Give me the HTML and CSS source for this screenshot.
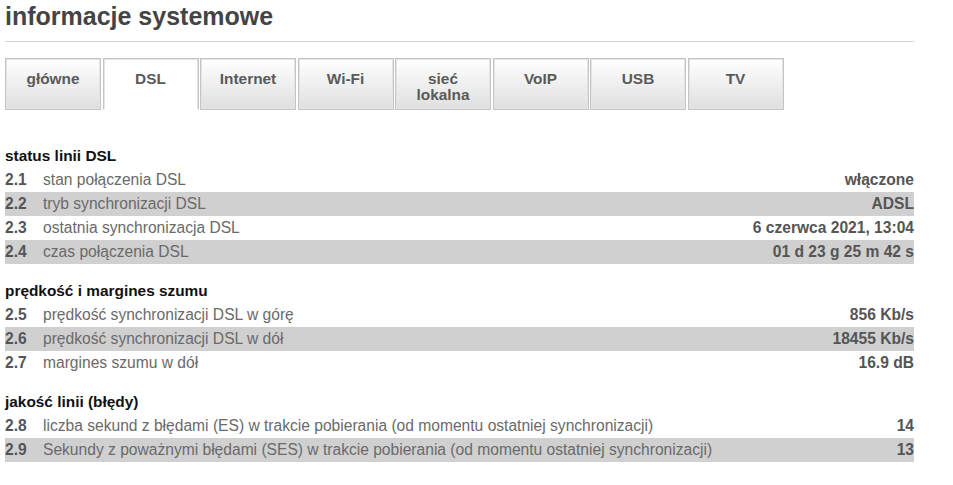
FILE: index.html
```html
<!DOCTYPE html>
<html lang="pl">
<head>
<meta charset="utf-8">
<title>informacje systemowe</title>
<link rel="stylesheet" href="styles.css">
</head>
<body>
<div class="page">
  <h1 class="title">informacje systemowe</h1>
  <div class="rule"></div>
  <nav class="tabs">
    <div class="tab">główne</div>
    <div class="tab active">DSL</div>
    <div class="tab">Internet</div>
    <div class="tab">Wi-Fi</div>
    <div class="tab">sieć<br>lokalna</div>
    <div class="tab">VoIP</div>
    <div class="tab">USB</div>
    <div class="tab">TV</div>
  </nav>

  <section class="group first">
    <h2 class="group-title">status linii DSL</h2>
    <div class="row"><span class="num">2.1</span><span class="label">stan połączenia DSL</span><span class="value">włączone</span></div>
    <div class="row alt"><span class="num">2.2</span><span class="label">tryb synchronizacji DSL</span><span class="value">ADSL</span></div>
    <div class="row"><span class="num">2.3</span><span class="label">ostatnia synchronizacja DSL</span><span class="value">6 czerwca 2021, 13:04</span></div>
    <div class="row alt"><span class="num">2.4</span><span class="label">czas połączenia DSL</span><span class="value">01 d 23 g 25 m 42 s</span></div>
  </section>

  <section class="group">
    <h2 class="group-title">prędkość i margines szumu</h2>
    <div class="row"><span class="num">2.5</span><span class="label">prędkość synchronizacji DSL w górę</span><span class="value">856 Kb/s</span></div>
    <div class="row alt"><span class="num">2.6</span><span class="label">prędkość synchronizacji DSL w dół</span><span class="value">18455 Kb/s</span></div>
    <div class="row"><span class="num">2.7</span><span class="label">margines szumu w dół</span><span class="value">16.9 dB</span></div>
  </section>

  <section class="group">
    <h2 class="group-title">jakość linii (błędy)</h2>
    <div class="row"><span class="num">2.8</span><span class="label">liczba sekund z błędami (ES) w trakcie pobierania (od momentu ostatniej synchronizacji)</span><span class="value">14</span></div>
    <div class="row alt"><span class="num">2.9</span><span class="label">Sekundy z poważnymi błędami (SES) w trakcie pobierania (od momentu ostatniej synchronizacji)</span><span class="value">13</span></div>
  </section>
</div>
</body>
</html>
```

FILE: styles.css
```css
html, body {
  margin: 0;
  padding: 0;
  background: #ffffff;
}

body {
  font-family: "Liberation Sans", Arial, sans-serif;
  color: #666666;
}

.page {
  width: 909px;
  margin-left: 5px;
}

.title {
  margin: 2px 0 0;
  font-size: 25px;
  line-height: 29px;
  font-weight: bold;
  color: #444444;
}

.rule {
  margin-top: 10px;
  height: 1px;
  background: #d5d5d5;
}

.tabs {
  display: flex;
  gap: 1.5px;
  margin-top: 16px;
}

.tab {
  box-sizing: border-box;
  width: 96px;
  height: 52px;
  padding-top: 12px;
  border: 1px solid #c4c4c4;
  box-shadow: inset 0 0 0 1px #e4e4e4;
  background: linear-gradient(#ffffff, #dfdfdf);
  text-align: center;
  font-size: 15.4px;
  line-height: 16px;
  font-weight: bold;
  color: #5a5a5a;
}

.tab.active {
  background: #ffffff;
  border-bottom-color: #ffffff;
  box-shadow: inset 1px 1px 0 #e4e4e4, inset -1px 0 0 #e4e4e4;
}

.group {
  margin-top: 15px;
}

.group.first {
  margin-top: 34px;
}

.group-title {
  margin: 0;
  height: 24px;
  font-size: 15.4px;
  line-height: 24px;
  font-weight: bold;
  color: #111111;
}

.row {
  display: flex;
  align-items: center;
  height: 24px;
  font-size: 15.6px;
}

.row.alt {
  background: #d0d0d0;
}

.num {
  width: 38px;
  flex: none;
  font-weight: bold;
  color: #555555;
}

.label {
  flex: 1;
  color: #6a6a6a;
}

.value {
  font-weight: bold;
  color: #555555;
  text-align: right;
}
```
